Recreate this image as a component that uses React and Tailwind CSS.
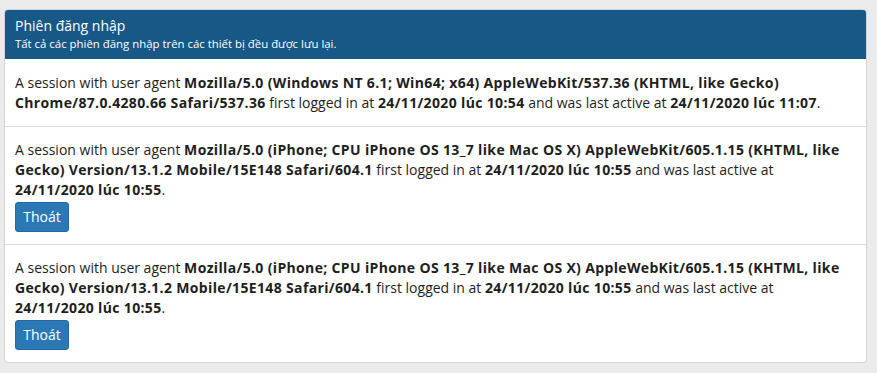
export default function App() {
  const rows = [
    {
      ua: "Mozilla/5.0 (Windows NT 6.1; Win64; x64) AppleWebKit/537.36 (KHTML, like Gecko) Chrome/87.0.4280.66 Safari/537.36",
      first: "24/11/2020 lúc 10:54",
      last: "24/11/2020 lúc 11:07",
      btn: false,
    },
    {
      ua: "Mozilla/5.0 (iPhone; CPU iPhone OS 13_7 like Mac OS X) AppleWebKit/605.1.15 (KHTML, like Gecko) Version/13.1.2 Mobile/15E148 Safari/604.1",
      first: "24/11/2020 lúc 10:55",
      last: "24/11/2020 lúc 10:55",
      btn: true,
    },
    {
      ua: "Mozilla/5.0 (iPhone; CPU iPhone OS 13_7 like Mac OS X) AppleWebKit/605.1.15 (KHTML, like Gecko) Version/13.1.2 Mobile/15E148 Safari/604.1",
      first: "24/11/2020 lúc 10:55",
      last: "24/11/2020 lúc 10:55",
      btn: true,
    },
  ];
  return (
    <div
      className="min-h-[373px] bg-[#ebebeb] pt-[9px] pl-[4px] pr-[10px] pb-[10px] text-[#1e1e1e]"
      style={{ fontFamily: '"Open Sans", "Noto Sans", sans-serif' }}
    >
      <div className="bg-white border border-[#d4d4d4] rounded-[4px] overflow-hidden">
        <div className="bg-[#175887] text-white px-[10px] pt-[6px] pb-[7px]">
          <div className="text-[14px] leading-[20px]">Phiên đăng nhập</div>
          <div className="text-[11.4px] leading-[16px]">Tất cả các phiên đăng nhập trên các thiết bị đều được lưu lại.</div>
        </div>
        {rows.map((r, i) => (
          <div
            key={i}
            className={i === 0 ? "px-[10px] pt-[14px] pb-[13px]" : "px-[10px] pt-[13px] pb-[12px] border-t border-[#dcdcdc]"}
          >
            <p className="text-[14px] leading-[20px]">
              A session with user agent <b className="font-bold tracking-[0.35px]">{r.ua}</b> first logged in at{" "}
              <b className="font-bold tracking-[0.35px]">{r.first}</b> and was last active at{" "}
              <b className="font-bold tracking-[0.35px]">{r.last}</b>.
            </p>
            {r.btn && (
              <button className="mt-[2px] h-[30px] w-[54px] rounded-[3px] bg-[#2a79b5] border border-[#2668a0] text-white text-[14px] leading-[20px]">
                Thoát
              </button>
            )}
          </div>
        ))}
      </div>
    </div>
  );
}
